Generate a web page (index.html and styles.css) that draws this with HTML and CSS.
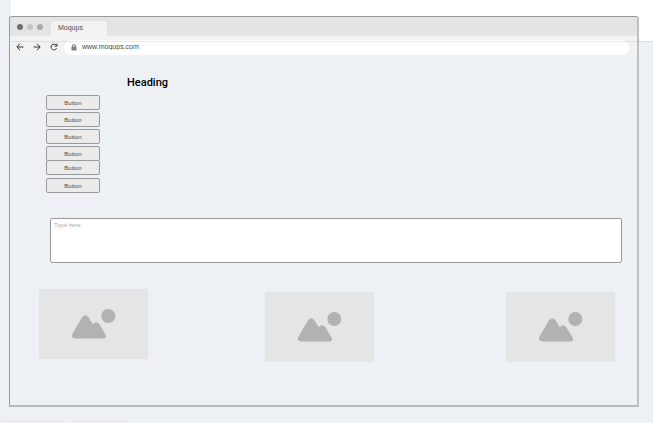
FILE: index.html
```html
<!DOCTYPE html>
<html lang="en">
<head>
<meta charset="utf-8">
<title>Moqups</title>
<link rel="stylesheet" href="styles.css">
</head>
<body>
<svg class="defs" aria-hidden="true">
  <symbol id="picture" viewBox="0 0 109 70">
    <path d="M43 28.200Q46.300 24.500 49.500 28.200L53.800 35.300Q57 31.500 60 34.800L66.500 45.500Q68.200 49.300 64.500 49.500H36.500Q31.500 49.300 33.600 44.500Z"/>
    <circle cx="69.300" cy="27" r="7"/>
  </symbol>
</svg>
<div class="sheet"></div>
<main class="window">
  <div class="titlebar">
    <span class="dot dark"></span>
    <span class="dot light"></span>
    <span class="dot"></span>
    <div class="tab">Moqups</div>
  </div>
  <div class="toolbar">
    <button class="nav" aria-label="Back"><svg viewBox="0 0 8 8"><path d="M7.500 4H1M4 .8L.8 4L4 7.200"/></svg></button>
    <button class="nav" aria-label="Forward"><svg viewBox="0 0 8 8"><path d="M.5 4H7M4 .8L7.200 4L4 7.200"/></svg></button>
    <button class="nav" aria-label="Reload"><svg viewBox="0 0 8 8"><path d="M6.600 5.200A2.900 2.900 0 1 1 6.400 2.400M7 .6V3.100H4.500"/></svg></button>
    <div class="address">
      <svg class="lock" viewBox="0 0 6 7" aria-hidden="true"><path class="shackle" d="M1.500 3V2a1.500 1.500 0 0 1 3 0V3"/><rect x="0.500" y="2.500" width="5" height="4" rx=".5"/></svg>
      <input class="url" type="text" aria-label="Address" value="www.moqups.com">
    </div>
  </div>
  <div class="content">
    <h1>Heading</h1>
    <div class="buttons">
      <button class="btn">Button</button>
      <button class="btn">Button</button>
      <button class="btn">Button</button>
      <button class="btn">Button</button>
      <button class="btn joined">Button</button>
      <button class="btn apart">Button</button>
    </div>
    <textarea class="message" aria-label="Message" placeholder="Type here"></textarea>
    <div class="pictures">
      <svg class="picture raised" role="img" aria-label="Image placeholder"><use href="#picture"/></svg>
      <svg class="picture" role="img" aria-label="Image placeholder"><use href="#picture"/></svg>
      <svg class="picture" role="img" aria-label="Image placeholder"><use href="#picture"/></svg>
    </div>
  </div>
</main>
<footer class="dock">
  <div class="panel first"></div>
  <div class="panel"></div>
</footer>
</body>
</html>
```
FILE: styles.css
```css
* {
  box-sizing: border-box;
}

body {
  position: relative;
  display: flex;
  flex-direction: column;
  height: 100vh;
  margin: 0;
  overflow: hidden;
  background: #edf1f6;
  color: #4a4a4a;
  font-family: "Liberation Sans", Arial, sans-serif;
  font-size: 7px;
}

button,
input,
textarea {
  margin: 0;
  font: inherit;
  color: inherit;
}

.defs {
  position: absolute;
  width: 0;
  height: 0;
}

/* The sheet lies under the window; its lower edge shows through the window. */
.sheet {
  position: absolute;
  top: 0;
  right: 0;
  left: 11px;
  height: 41px;
  background: #fff;
}

.sheet::after {
  content: "";
  position: absolute;
  z-index: 2;
  top: 100%;
  right: 0;
  left: 0;
  height: 1px;
  background: rgba(0, 0, 0, 0.08);
}

.window {
  position: relative;
  z-index: 1;
  flex: 1;
  margin: 16px 14px 0 9px;
  border: 1px solid #999;
  border-right: 2px solid #bfc1c4;
  border-bottom: 2px solid #b8bbbe;
  border-radius: 3px 3px 0 0;
  background: #edf1f6;
}

.titlebar {
  display: flex;
  align-items: center;
  gap: 4px;
  height: 19px;
  padding-left: 7px;
  border-radius: 2px 2px 0 0;
  background: #e4e4e4;
}

.dot {
  width: 6px;
  height: 6px;
  border-radius: 50%;
  background: #a9a9a9;
}

.dot.dark {
  background: #707070;
}

.dot.light {
  background: #c4c4c4;
}

.tab {
  align-self: flex-end;
  width: 56px;
  height: 15px;
  margin-left: 4px;
  padding-left: 7px;
  border-radius: 2px 2px 0 0;
  background: #f2f2f2;
  line-height: 14px;
}

.toolbar {
  display: flex;
  align-items: center;
  gap: 9px;
  height: 20px;
  padding: 2px 8px 0 6px;
  background: #f2f2f2;
}

.nav {
  width: 8px;
  height: 8px;
  padding: 0;
  border: 0;
  background: none;
}

.nav svg {
  display: block;
  fill: none;
  stroke: #333;
  stroke-width: 1;
}

.address {
  display: flex;
  flex: 1;
  align-items: center;
  gap: 5px;
  height: 15px;
  margin-left: -3px;
  padding: 0 8px 0 7px;
  border-radius: 8px;
  background: #fff;
}

.lock {
  width: 6px;
  height: 7px;
  fill: #808080;
}

.shackle {
  fill: none;
  stroke: #808080;
}

.url {
  flex: 1;
  height: 15px;
  padding: 0 0 2px;
  border: 0;
  background: none;
}

.content {
  padding: 20px 15px 0 29px;
}

h1 {
  margin: 0 0 5px 88px;
  color: #000;
  font: 500 11px/14px Roboto, sans-serif;
}

.buttons {
  display: flex;
  flex-direction: column;
  gap: 2px;
  width: 54px;
  margin-left: 7px;
}

.btn {
  height: 15px;
  padding: 0;
  border: 1px solid #999;
  border-radius: 2px;
  background: #ebebeb;
  font-size: 6px;
  line-height: 12px;
}

.btn.joined {
  margin-top: -3px;
}

.btn.apart {
  margin-top: 1px;
}

.message {
  display: block;
  width: calc(100% - 11px);
  height: 45px;
  margin: 25px 0 26px 11px;
  padding: 3px;
  border: 1px solid #999;
  border-radius: 2px;
  background: #fff;
  font-size: 6px;
  line-height: 7px;
  resize: none;
}

.message::placeholder {
  color: #aaa;
}

.pictures {
  display: grid;
  grid-template-columns: 226fr 241fr 109px;
  align-items: end;
  margin-right: 7px;
}

.picture {
  width: 109px;
  height: 70px;
  background: #e5e5e5;
  fill: #b2b2b2;
}

.picture.raised {
  margin-bottom: 3px;
}

.dock {
  display: flex;
  gap: 10px;
  height: 2px;
  margin-top: 14px;
}

.panel {
  width: 55px;
  border: 1px solid #dde1e6;
  border-bottom: 0;
  border-radius: 2px 2px 0 0;
  background: #f8f9fb;
}

.panel.first {
  width: 62px;
  border-left: 0;
}
```
